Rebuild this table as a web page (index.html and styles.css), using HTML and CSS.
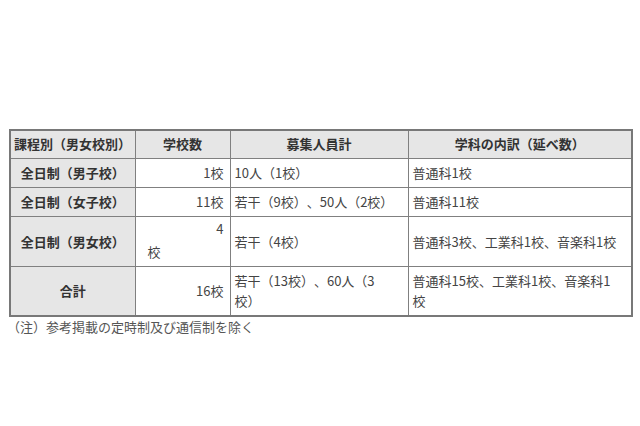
FILE: index.html
```html
<!DOCTYPE html>
<html lang="ja">
<head>
<meta charset="utf-8">
<link rel="stylesheet" href="styles.css">
</head>
<body>
<div class="page">
  <table class="tbl">
    <colgroup>
      <col class="c1"><col class="c2"><col class="c3"><col class="c4">
    </colgroup>
    <thead>
      <tr>
        <th class="first">課程別（男女校別）</th>
        <th>学校数</th>
        <th>募集人員計</th>
        <th>学科の内訳（延べ数）</th>
      </tr>
    </thead>
    <tbody>
      <tr>
        <th>全日制（男子校）</th>
        <td class="num">1校</td>
        <td class="txt3">10人（1校）</td>
        <td class="txt4">普通科1校</td>
      </tr>
      <tr>
        <th>全日制（女子校）</th>
        <td class="num">11校</td>
        <td class="txt3">若干（9校）、50人（2校）</td>
        <td class="txt4">普通科11校</td>
      </tr>
      <tr>
        <th>全日制（男女校）</th>
        <td class="split"><div class="up">4</div><div class="down">校</div></td>
        <td class="txt3">若干（4校）</td>
        <td class="txt4">普通科3校、工業科1校、音楽科1校</td>
      </tr>
      <tr>
        <th>合計</th>
        <td class="num">16校</td>
        <td class="txt3">若干（13校）、60人（3校）</td>
        <td class="txt4">普通科15校、工業科1校、音楽科1校</td>
      </tr>
    </tbody>
  </table>
  <p class="note">（注）参考掲載の定時制及び通信制を除く</p>
</div>
</body>
</html>
```

FILE: styles.css
```css
html, body {
  margin: 0;
  padding: 0;
  background: #ffffff;
}
body {
  font-family: "Noto Sans CJK JP", "Noto Sans", sans-serif;
  font-size: 13px;
  color: #333333;
  text-spacing-trim: space-all;
}
.page {
  padding: 129px 9px 0 9px;
}
.tbl {
  width: 622px;
  border-collapse: collapse;
  border: 2px solid #787878;
  table-layout: fixed;
}
.c1 { width: 125px; }
.c2 { width: 95px; }
.c3 { width: 178px; }
.c4 { width: 224px; }
.tbl th, .tbl td {
  border: 1px solid #808080;
  padding: 4px 4px;
  line-height: 20px;
  vertical-align: middle;
}
.tbl th {
  background: #e6e6e6;
  font-weight: bold;
  color: #333333;
  text-align: center;
}
.tbl thead th {
  padding: 3px 4px 4px;
}
.tbl th.first {
  text-align: left;
  padding-left: 3px;
  padding-right: 0;
}
.tbl td {
  text-align: left;
  color: #444444;
}
.tbl td.txt3 {
  padding-right: 12px;
}
.tbl td.txt4 {
  padding-right: 12px;
}
.tbl td.num {
  text-align: right;
  padding-right: 6px;
}
.tbl td.split {
  padding: 2px 6px 4px 12px;
}
.split .up {
  text-align: right;
}
.split .down {
  text-align: left;
  margin-top: 3px;
}
.note {
  margin: 0;
  margin-left: -2px;
  line-height: 20px;
  color: #555555;
  font-size: 13px;
}
```
